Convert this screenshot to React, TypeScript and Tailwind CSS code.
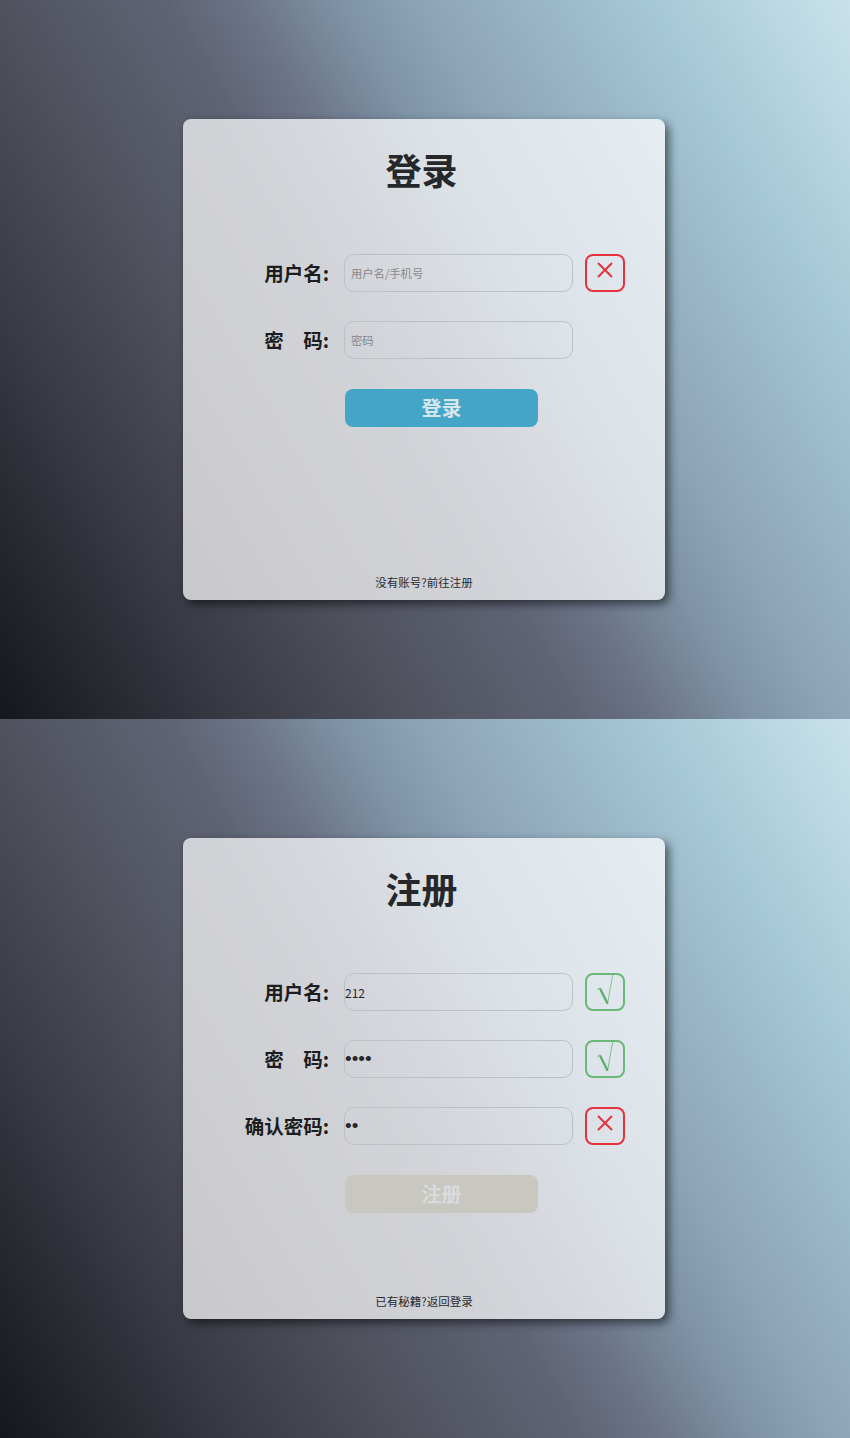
const cjk = "font-['Noto_Sans_CJK_SC','Liberation_Sans',sans-serif]";

type Status = "ok" | "bad" | "none";

function StatusBox({ status }: { status: Status }) {
    if (status === "none") return <div className="h-[38px] w-10" />;
    if (status === "ok") {
        return (
            <div className="flex h-[38px] w-10 items-center justify-center rounded-lg border-2 border-[#6cb877]">
                <svg width="26" height="32" viewBox="0 0 26 32" fill="none" className="overflow-visible">
                    <path d="M5 13.5 L8 12 L15.5 28 L21 -3" stroke="#5fae6e" strokeWidth="0.7" />
                    <path d="M8 12.5 L15.5 27.5" stroke="#5fae6e" strokeWidth="2.4" />
                </svg>
            </div>
        );
    }
    return (
        <div className="flex h-[38px] w-10 justify-center rounded-lg border-2 border-[#e5323e] pt-[6px]">
            <svg width="16" height="16" viewBox="0 0 16 16" fill="none">
                <path d="M1 1 L15 15 M15 1 L1 15" stroke="#e5323e" strokeWidth="2" />
            </svg>
        </div>
    );
}

function Row({ label, type, value, placeholder, status }: { label: string; type: string; value?: string; placeholder?: string; status: Status }) {
    const masked = value && type === "password";
    return (
        <div className="flex items-center">
            <label className="w-[146px] text-right text-[19.5px] leading-[38px] font-bold text-[#1c1d21]">{label}</label>
            <input
                readOnly
                type={type}
                value={value ?? ""}
                placeholder={placeholder}
                className={`ml-[15px] h-[38px] w-[229px] rounded-[10px] border border-[#bdc0c4] bg-transparent text-[#26272b] outline-none placeholder:text-[#85888d] ${
                    masked ? "font-['Liberation_Sans',sans-serif] text-[19px]" : cjk
                } ${value ? "pl-0" : "pl-[6px]"} ${!masked && value ? "text-[12px]" : ""} ${!value ? "text-[11.3px]" : ""}`}
            />
            <div className="ml-[12px]">
                <StatusBox status={status} />
            </div>
        </div>
    );
}

function Panel({ title, rows, button, disabled, foot }: {
    title: string;
    rows: { label: string; type: string; value?: string; placeholder?: string; status: Status }[];
    button: string;
    disabled?: boolean;
    foot: string;
}) {
    return (
        <section className="flex h-[719px] items-center justify-center bg-[linear-gradient(60deg,#15171c_0%,#373943_18%,#50525e_33%,#5f6475_46%,#6c7488_52%,#7f95a7_60%,#8ca4b6_66%,#a6c7d6_84%,#c8e2ec_100%)]">
            <div className="mr-[2px] flex h-[481px] w-[482px] flex-col rounded-lg bg-white/[0.72] shadow-[4px_4px_10px_rgba(0,0,0,0.55)]">
                <h1 className="mt-[25px] mr-[5px] text-center text-[36px] leading-[50px] font-bold text-[#25272b]">{title}</h1>
                <div className="mt-[60px] flex flex-col gap-[29px]">
                    {rows.map((r) => (
                        <Row key={r.label} {...r} />
                    ))}
                </div>
                <button
                    className={`mt-[30px] ml-[162px] h-[38px] w-[193px] rounded-lg text-[20px] font-bold ${disabled ? "bg-[#c8c8c0] text-[#d9dcde]" : "bg-[#45a5c6] text-[#d5e6ec]"}`}
                >
                    {button}
                </button>
                <p className="mt-auto pb-[9px] text-center text-[11.5px] leading-[17px] text-[#2a2b2f]">{foot}</p>
            </div>
        </section>
    );
}

export default function App() {
    return (
        <div className={`w-[850px] ${cjk}`}>
            <Panel
                title="登录"
                rows={[
                    { label: "用户名:", type: "text", placeholder: "用户名/手机号", status: "bad" },
                    { label: "密　码:", type: "password", placeholder: "密码", status: "none" },
                ]}
                button="登录"
                foot="没有账号?前往注册"
            />
            <Panel
                title="注册"
                rows={[
                    { label: "用户名:", type: "text", value: "212", status: "ok" },
                    { label: "密　码:", type: "password", value: "1234", status: "ok" },
                    { label: "确认密码:", type: "password", value: "12", status: "bad" },
                ]}
                button="注册"
                disabled
                foot="已有秘籍?返回登录"
            />
        </div>
    );
}
